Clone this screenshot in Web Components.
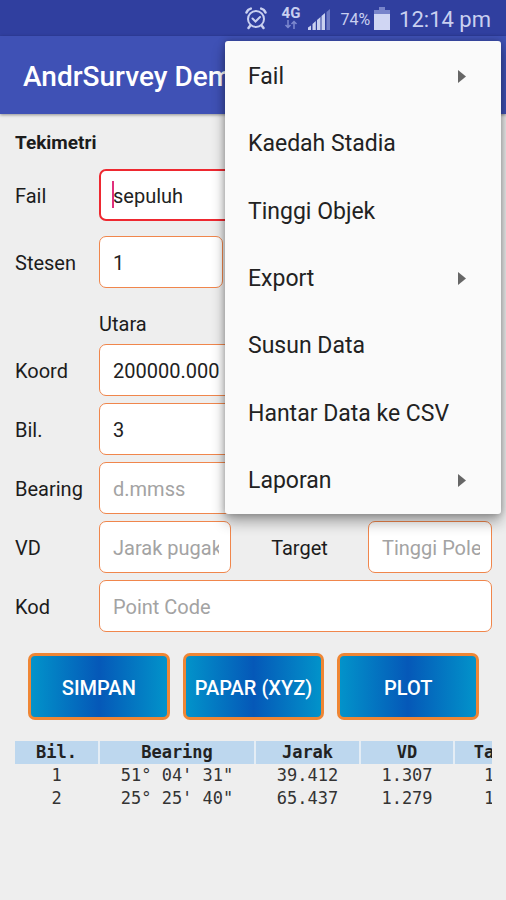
<!DOCTYPE html>
<html lang="ms">
<head>
<meta charset="utf-8">
<meta name="viewport" content="width=device-width, initial-scale=1">
<title>AndrSurvey Demo</title>
<style>
html { background: #eee; }
body { margin: 0; font-family: Roboto, "Noto Sans", sans-serif; color: #1c1c1c; background: #eee; }
</style>
</head>
<body>
<survey-app></survey-app>
<script>
class BaseElement extends HTMLElement {
  render(html) {
    this.attachShadow({ mode: 'open' }).innerHTML = '<style>*{box-sizing:border-box}</style>' + html;
  }
}

customElements.define('status-bar', class extends BaseElement {
  connectedCallback() {
    this.render(`<style>
:host{display:flex;height:36px;padding:2px 15px 0 0;align-items:center;justify-content:flex-end;background:#303f9f;color:#c9d0f0}
svg{display:block;flex:none}
.net{display:flex;flex-direction:column;align-items:center;margin:0 8px 0 15px;padding-bottom:4px;font-size:15px;line-height:14px;font-weight:700}
.pct{font-size:16px;margin:0 4px 0 9px}
.time{font-size:22px;margin-left:9px}
</style>
<svg width="22" height="24" viewBox="0 0 22 24" fill="none" stroke="currentColor" stroke-width="2" stroke-linecap="round">
<circle cx="11" cy="12" r="8"/><path d="M7.500 11.500l3 3 4.500-4.500"/><path stroke-width="2.500" d="M1.500 5.500c.8-2 2.300-3.400 4.300-3.900M20.500 5.500c-.8-2-2.300-3.400-4.300-3.900M5 19l-1.500 2M17 19l1.500 2"/></svg>
<div class="net"><span>4G</span>
<svg width="14" height="9" viewBox="0 0 14 9" fill="none" stroke="#7d89cf" stroke-width="1.500"><path d="M4 0v7M1.500 5L4 7.500 6.500 5M10 9V1.500M7.500 4L10 1.500 12.500 4"/></svg></div>
<svg width="23" height="22" viewBox="0 0 23 22" fill="currentColor"><path d="M0 22v-2.500l3-2V22zM4.500 22v-6l3.300-3V22zM9 22V12l3.500-3v13zM13.500 22V8L17 5v17z"/><path fill="#6c78c4" d="M18.500 22V4L22 1v21z"/></svg>
<span class="pct">74%</span>
<svg width="16" height="24" viewBox="0 0 16 24"><path fill="#7884ca" d="M5 0h6v3h5v5H0V3h5z"/><path fill="#d0d6f3" d="M0 7h16v16H0z"/></svg>
<span class="time">12:14 pm</span>`);
  }
});

customElements.define('app-bar', class extends BaseElement {
  connectedCallback() {
    this.render(`<style>
:host{display:flex;align-items:center;height:78px;padding:4px 23px 0;background:#3f51b5;color:#fff;box-shadow:0 1px 3px rgba(0,0,0,.4)}
h1{margin:0;font-size:28px;line-height:36px;font-weight:500;white-space:nowrap}
</style><h1><slot></slot></h1>`);
  }
});

customElements.define('labeled-field', class extends BaseElement {
  connectedCallback() {
    const a = n => this.getAttribute(n) || '';
    this.render(`<style>
:host{display:flex;align-items:center;min-width:0;flex:1}
label{flex:none;width:84px;padding-top:1px;font-size:20px;line-height:24px}
:host([centered]) label{width:137px;text-align:center}
.box{position:relative;flex:1;min-width:0}
input{display:block;width:100%;height:52px;padding:2px 11px 0 13px;border:1px solid #f0864c;border-radius:7px;background:#fff;color:#222;font:20px Roboto,"Noto Sans",sans-serif;outline:0}
input::placeholder{color:#a3a3a3;opacity:1}
:host([active]) input{border:2px solid #ee2830;padding:2px 10px 0 12px}
.caret{display:none;position:absolute;left:13px;top:12px;width:2px;height:27px;background:#e0307c}
:host([active]) .caret{display:block}
</style>
<label for="f">${a('label')}</label>
<div class="box"><input id="f" type="text" value="${a('value')}" placeholder="${a('hint')}"><span class="caret"></span></div>`);
  }
});

customElements.define('field-row', class extends BaseElement {
  connectedCallback() {
    this.render(`<style>:host{display:flex}</style><slot></slot>`);
  }
});

customElements.define('action-button', class extends BaseElement {
  connectedCallback() {
    this.render(`<style>
:host{display:block;flex:1}
button{display:block;width:100%;height:67px;padding:2px 0 0;border:3px solid #ef8634;border-radius:7px;background:linear-gradient(90deg,#0293ca,#0558b8 50%,#0293ca);color:#fff;font:500 20px Roboto,"Noto Sans",sans-serif;white-space:nowrap}
</style><button type="button"><slot></slot></button>`);
  }
});

customElements.define('data-table', class extends BaseElement {
  connectedCallback() {
    const head = ['Bil.', 'Bearing', 'Jarak', 'VD', 'Target'];
    const rows = [['1', '51° 04\' 31"', '39.412', '1.307', '1.50'], ['2', '25° 25\' 40"', '65.437', '1.279', '1.50']];
    this.render(`<style>
:host{display:block;overflow:hidden}
table{width:541px;table-layout:fixed;border-collapse:separate;border-spacing:0;font:17px/23px "DejaVu Sans Mono","Liberation Mono",monospace;text-align:center;color:#333}
th,td{padding:0;height:23px;white-space:nowrap;border-right:2px solid transparent}
th{background:#bdd7ee;background-clip:padding-box;border-right-color:#e4edf5;font-weight:700;color:#222}
</style><table><colgroup><col style="width:85px"><col style="width:156px"><col style="width:105px"><col style="width:94px"><col style="width:101px"></colgroup>
<thead><tr>${head.map(t => `<th scope="col">${t}</th>`).join('')}</tr></thead>
<tbody>${rows.map(r => `<tr>${r.map(t => `<td>${t}</td>`).join('')}</tr>`).join('')}</tbody></table>`);
  }
});

customElements.define('menu-item', class extends BaseElement {
  connectedCallback() {
    this.render(`<style>
:host{display:flex;flex:1}
button{flex:1;display:flex;align-items:center;justify-content:space-between;padding:0 35px 0 23px;border:0;background:none;color:#222;font:23px Roboto,"Noto Sans",sans-serif;text-align:left}
svg{display:none}
:host([submenu]) svg{display:block}
</style><button type="button" role="menuitem"><slot></slot><svg width="8" height="13" viewBox="0 0 8 13"><path fill="#666" d="M0 0l8 6.500L0 13z"/></svg></button>`);
  }
});

customElements.define('popup-menu', class extends BaseElement {
  connectedCallback() {
    this.setAttribute('role', 'menu');
    this.render(`<style>
:host{position:absolute;top:41px;right:5px;z-index:5;display:flex;flex-direction:column;width:276px;height:473px;padding-top:2px;background:#fafafa;border-radius:3px;box-shadow:0 8px 14px rgba(0,0,0,.32),0 0 7px rgba(0,0,0,.28)}
</style><slot></slot>`);
  }
});

customElements.define('survey-app', class extends BaseElement {
  connectedCallback() {
    this.render(`<style>
:host{display:block;position:relative;min-height:100vh;overflow:hidden}
main{padding:17px 14px 0 15px}
h2{margin:0 0 14px;font-size:19px;line-height:24px;font-weight:700}
.caption{margin:24px 0 8px 84px;font-size:20px;line-height:24px}
.stack{display:grid;gap:15px}
.tight{gap:7px}
.actions{display:flex;gap:13px;margin:21px 13px}
.wide{flex:261}.narrow{flex:216}
.first{flex:208}.rest{flex:269}
</style>
<status-bar></status-bar>
<app-bar>AndrSurvey Demo</app-bar>
<main>
<h2>Tekimetri</h2>
<div class="stack">
<labeled-field label="Fail" value="sepuluh" active></labeled-field>
<field-row><labeled-field class="first" label="Stesen" value="1"></labeled-field><span class="rest"></span></field-row>
</div>
<div class="caption">Utara</div>
<div class="stack tight">
<labeled-field label="Koord" value="200000.000"></labeled-field>
<labeled-field label="Bil." value="3"></labeled-field>
<labeled-field label="Bearing" hint="d.mmss"></labeled-field>
<field-row><labeled-field class="narrow" label="VD" hint="Jarak pugak"></labeled-field><labeled-field class="wide" centered label="Target" hint="Tinggi Pole"></labeled-field></field-row>
<labeled-field label="Kod" hint="Point Code"></labeled-field>
</div>
<div class="actions"><action-button>SIMPAN</action-button><action-button>PAPAR (XYZ)</action-button><action-button>PLOT</action-button></div>
<data-table></data-table>
</main>
<popup-menu>
<menu-item submenu>Fail</menu-item>
<menu-item>Kaedah Stadia</menu-item>
<menu-item>Tinggi Objek</menu-item>
<menu-item submenu>Export</menu-item>
<menu-item>Susun Data</menu-item>
<menu-item>Hantar Data ke CSV</menu-item>
<menu-item submenu>Laporan</menu-item>
</popup-menu>`);
  }
});
</script>
</body>
</html>
